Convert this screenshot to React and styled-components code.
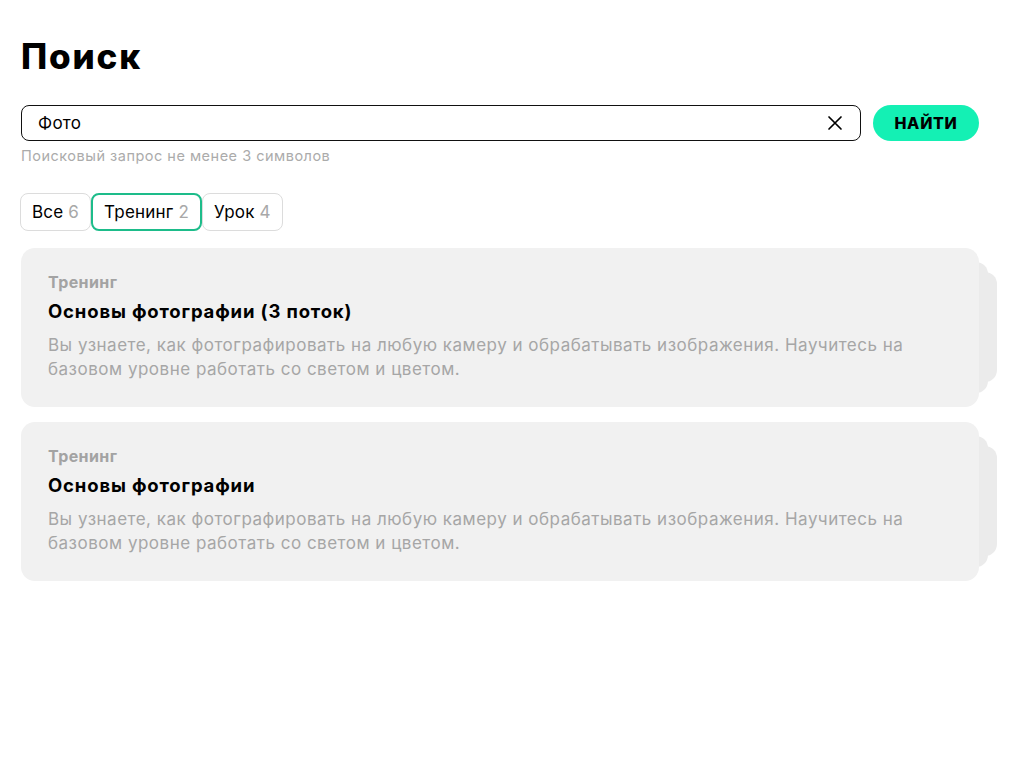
import React from "react";
import styled, { createGlobalStyle } from "styled-components";

const GlobalStyle = createGlobalStyle`
  body {
    margin: 0;
    background: #ffffff;
    font-family: Inter, "Noto Sans", sans-serif;
    color: #000;
  }
`;

// Hauptcontainer
const Page = styled.div`
  width: 958px;
  padding: 34px 0 40px 21px;
`;

const Title = styled.h1`
  margin: 0;
  font-size: 35px;
  line-height: 44px;
  font-weight: 800;
  letter-spacing: 1.8px;
`;

const SearchRow = styled.div`
  display: flex;
  align-items: center;
  gap: 12px;
  margin-top: 27px;
`;

const InputBox = styled.div`
  flex: 1;
  height: 36px;
  box-sizing: border-box;
  border: 1px solid #111;
  border-radius: 8px;
  display: flex;
  align-items: center;
  padding: 0 17px 0 16px;
`;

const Input = styled.input`
  flex: 1;
  border: none;
  outline: none;
  background: transparent;
  font-family: inherit;
  font-size: 17px;
  letter-spacing: 0.3px;
  color: #000;
  padding: 0;
`;

const ClearButton = styled.button`
  border: none;
  background: none;
  padding: 0;
  display: flex;
  cursor: pointer;
`;

const FindButton = styled.button`
  width: 106px;
  height: 36px;
  border: none;
  border-radius: 18px;
  background: #14f0b4;
  font-family: inherit;
  font-size: 16px;
  font-weight: 800;
  letter-spacing: 0.7px;
  color: #000;
  cursor: pointer;
`;

const Hint = styled.div`
  margin-top: 6px;
  font-size: 14.5px;
  line-height: 18px;
  letter-spacing: 0.5px;
  color: #ababab;
`;

const Tabs = styled.div`
  display: flex;
  margin-top: 28px;
  margin-left: -1px;
`;

const Tab = styled.button`
  height: 38px;
  box-sizing: border-box;
  padding: 0 11px;
  border: ${(p) => (p.$active ? "2px solid #1dbc8a" : "1px solid #dcdcdc")};
  border-radius: 8px;
  background: #fff;
  font-family: inherit;
  font-size: 17px;
  letter-spacing: 0.2px;
  color: #000;
  cursor: pointer;
`;

const Count = styled.span`
  color: #a8a8a8;
`;

const CardList = styled.div`
  display: flex;
  flex-direction: column;
  gap: 15px;
  margin-top: 17px;
`;

// Karte mit zwei Ebenen dahinter
const CardStack = styled.div`
  position: relative;

  &::before,
  &::after {
    content: "";
    position: absolute;
    background: #ebebeb;
    border-radius: 12px;
  }
  &::before {
    top: 14px;
    bottom: 14px;
    right: -9px;
    width: 40px;
  }
  &::after {
    top: 24px;
    bottom: 25px;
    right: -18px;
    width: 40px;
  }
`;

const Card = styled.div`
  position: relative;
  z-index: 1;
  background: #f1f1f1;
  border-radius: 14px;
  padding: 24px 27px 26px;
`;

const Kind = styled.div`
  font-size: 16px;
  line-height: 20px;
  font-weight: 700;
  letter-spacing: 0.4px;
  color: #a3a3a3;
`;

const CardTitle = styled.div`
  margin-top: 7px;
  font-size: 18.5px;
  line-height: 24px;
  font-weight: 700;
  letter-spacing: 0.85px;
  color: #000;
`;

const Text = styled.p`
  margin: 10px 0 0;
  font-size: 17px;
  line-height: 24px;
  letter-spacing: 0.5px;
  color: #a6a6a6;
`;

const XIcon = () => (
  <svg width="16" height="16" viewBox="0 0 16 16">
    <path d="M2 2L14 14M14 2L2 14" stroke="#000" strokeWidth="1.7" strokeLinecap="round" />
  </svg>
);

const results = [
  { id: 1, kind: "Тренинг", title: "Основы фотографии (3 поток)" },
  { id: 2, kind: "Тренинг", title: "Основы фотографии" },
];

const description =
  "Вы узнаете, как фотографировать на любую камеру и обрабатывать изображения. Научитесь на базовом уровне работать со светом и цветом.";

const App = () => {
  return (
    <>
      <GlobalStyle />
      <Page>
        <Title>Поиск</Title>
        <SearchRow>
          <InputBox>
            <Input defaultValue="Фото" />
            <ClearButton aria-label="Очистить">
              <XIcon />
            </ClearButton>
          </InputBox>
          <FindButton>НАЙТИ</FindButton>
        </SearchRow>
        <Hint>Поисковый запрос не менее 3 символов</Hint>

        <Tabs>
          <Tab>
            Все <Count>6</Count>
          </Tab>
          <Tab $active>
            Тренинг <Count>2</Count>
          </Tab>
          <Tab>
            Урок <Count>4</Count>
          </Tab>
        </Tabs>

        <CardList>
          {results.map((r) => (
            <CardStack key={r.id}>
              <Card>
                <Kind>{r.kind}</Kind>
                <CardTitle>{r.title}</CardTitle>
                <Text>{description}</Text>
              </Card>
            </CardStack>
          ))}
        </CardList>
      </Page>
    </>
  );
};

export default App;
